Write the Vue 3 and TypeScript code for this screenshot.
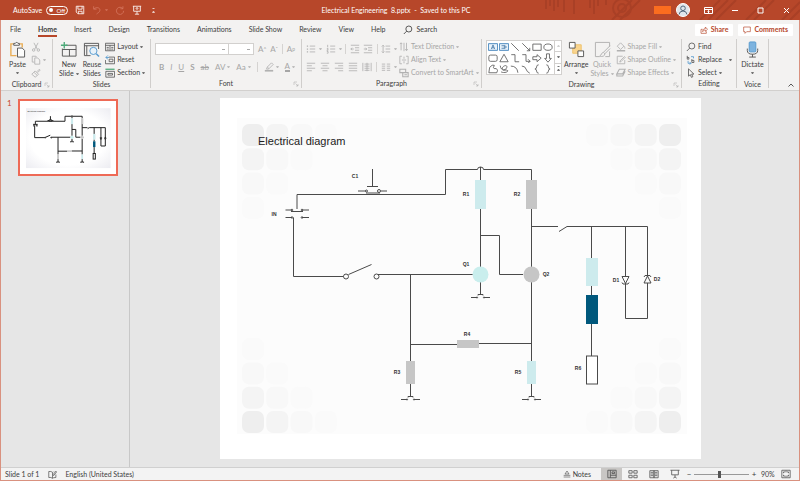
<script setup lang="ts">
import { ref } from 'vue'

const tabs = ['File', 'Home', 'Insert', 'Design', 'Transitions', 'Animations', 'Slide Show', 'Review', 'View', 'Help']
const activeTab = ref('Home')
const zoom = ref(90)

const shapes = ['textbox', 'textbox2', 'line', 'arrow', 'rect', 'oval', 'round', 'tri', 'elbow', 'elbow2', 'rarrow', 'darrow', 'free', 'scrib', 'arc', 'curve', 'lbrace', 'rbrace']

interface Tile { x: number; y: number; tone: string }
const tones = ['#eeeeee', '#f4f4f4', '#f8f8f8', '#fafafa']
const tiles: Tile[] = []
for (let row = 0; row < 4; row++) {
  for (let col = 0; col < 4 - row; col++) {
    const tone = tones[row + col]
    const left = 22 + col * 24.3
    const right = 439 - col * 24.3
    const top = 26 + row * 24.3
    const bottom = 313 - row * 24.3
    tiles.push({ x: left, y: top, tone }, { x: right, y: top, tone }, { x: left, y: bottom, tone }, { x: right, y: bottom, tone })
  }
}

interface Label { text: string; x: number; y: number }
const labels: Label[] = [
  { text: 'C1', x: 135, y: 80 },
  { text: 'IN', x: 54, y: 118 },
  { text: 'R1', x: 246, y: 98 },
  { text: 'R2', x: 297, y: 98 },
  { text: 'Q1', x: 246, y: 168 },
  { text: 'Q2', x: 326, y: 178 },
  { text: 'D1', x: 396, y: 184 },
  { text: 'D2', x: 437, y: 183 },
  { text: 'R3', x: 177, y: 276 },
  { text: 'R4', x: 247, y: 238 },
  { text: 'R5', x: 298, y: 276 },
  { text: 'R6', x: 358, y: 272 },
]
</script>

<template>
  <div class="window">
    <svg class="defs" aria-hidden="true">
      <symbol id="save" viewBox="0 0 12 12"><path d="M1.500 1.500h9v9h-7l-2-2zM3.500 1.500v3.500h5v-3.500M4 10.500v-3h4.500v3" /></symbol>
      <symbol id="undo" viewBox="0 0 12 12"><path d="M2 1.500v3.500h3.500M2.300 4.800C5 2 10 3 9.500 6.500C9.200 8.500 7 9.500 5.500 10.800" /></symbol>
      <symbol id="redo" viewBox="0 0 12 12"><path d="M9.500 1.500v3h-3M9.500 4.500A4.300 4.300 0 1 0 10.300 7" /></symbol>
      <symbol id="present" viewBox="0 0 12 12"><path d="M1 1.500h10M2 1.500v6h8v-6M6 7.500v3.500M3.500 11h5M6 3v3M4.500 4.500L6 3l1.500 1.500" /></symbol>
      <symbol id="search" viewBox="0 0 12 12"><circle cx="7" cy="4.800" r="3.600" /><path d="M4.400 7.400L1 10.800" /></symbol>
      <symbol id="share" viewBox="0 0 12 12"><path d="M4 5H1.500v6h8V8M4 8.500c0-3 1.500-4.500 4-4.500V1.500L11.300 5L8 8V6C6 6 5 7 4 8.500z" /></symbol>
      <symbol id="comment" viewBox="0 0 12 12"><path d="M1 1.500h10v7H5.500L3 11V8.500H1z" /></symbol>
      <symbol id="paste" viewBox="0 0 18 18"><path d="M8 15.500H2V3h3M11 3h3v4" stroke="#e8a33d" stroke-width="1.500" /><path d="M5 4.500v-2h1.700a1.500 1.500 0 0 1 2.800 0H11v2z" fill="#fff" /><path d="M9 7.500h5l2.500 2.500v7H9z" fill="#fff" /></symbol>
      <symbol id="cut" viewBox="0 0 12 12"><path d="M3.500 1l4 7.500M8.500 1l-4 7.500" /><circle cx="3.200" cy="9.600" r="1.500" /><circle cx="8.800" cy="9.600" r="1.500" /></symbol>
      <symbol id="copy" viewBox="0 0 12 12"><path d="M4 8.500H1.500v-7H6l1 1M4.500 3.500H8L10.500 6v5h-6z" /></symbol>
      <symbol id="brush" viewBox="0 0 12 12"><path d="M7 4.500l3-3l1 1l-3 3M5 3.500l4 4l-1.500 1.500l-4-4zM3.500 5L1 7.500L5 11l2.500-2" /></symbol>
      <symbol id="newslide" viewBox="0 0 18 18"><path d="M6 4.500h11v11.500H2.500V8M2.500 9H17M10 9v7" /><path d="M4.500 1v7M1 4.500h7" stroke="#2f9d63" stroke-width="1.400" /></symbol>
      <symbol id="reuse" viewBox="0 0 18 18"><path d="M8 15.500H1.500V2.500h15v6M1.500 5h15M4 5v10" /><circle cx="11" cy="10.500" r="3.800" fill="#e8f3fb" stroke="#3b8bc9" /><path d="M14 13.500l3 3" stroke="#3b8bc9" stroke-width="1.500" /></symbol>
      <symbol id="layout" viewBox="0 0 12 12"><path d="M.500 1.500h11v9H.500zM.500 4h11M6 4v6M2 6.500h2.500M7.500 6.500h2.500M2 8.500h2.500M7.500 8.500h2.500" /></symbol>
      <symbol id="reset" viewBox="0 0 12 12"><path d="M4.500 2.500h7v8H.500V6M5 5h4.500v3H5z" /><path d="M3.500 .500L1 3l2.500 2M1 3h4" stroke="#3b8bc9" /></symbol>
      <symbol id="section" viewBox="0 0 12 12"><path d="M1 4h10.500v7H1zM3.500 6.500h5.500v2H3.500z" /><path d="M.500 1.500h11" stroke="#2f9d63" stroke-width="1.500" /></symbol>
      <symbol id="marker" viewBox="0 0 12 12"><path d="M4 6l5-5l2 2l-5 5zM4 6L3 8.500h2.500L6 8" /><path d="M1 10.500h10" stroke-width="2" /></symbol>
      <symbol id="bullets" viewBox="0 0 12 12"><path d="M4.500 2.500H11M4.500 6H11M4.500 9.500H11" /><path d="M1 2.500h1.500M1 6h1.500M1 9.500h1.500" stroke-width="1.500" /></symbol>
      <symbol id="numbers" viewBox="0 0 12 12"><path d="M5 2.500h6M5 6h6M5 9.500h6M2 1v3M1 5.500h1.500v1.200L1 7.500h1.700M1 9h1.500v2H1" /></symbol>
      <symbol id="outdent" viewBox="0 0 12 12"><path d="M1 1.500h10M6 4.500h5M6 7.500h5M1 10.500h10M4.500 6H1M2.500 4.500L1 6l1.500 1.500" /></symbol>
      <symbol id="indent" viewBox="0 0 12 12"><path d="M1 1.500h10M6 4.500h5M6 7.500h5M1 10.500h10M1 6h3.500M3 4.500L4.500 6L3 7.500" /></symbol>
      <symbol id="spacing" viewBox="0 0 12 12"><path d="M5.500 2.500H11M5.500 6H11M5.500 9.500H11M2.500 1.500v9M1 3l1.500-1.500L4 3M1 9l1.500 1.500L4 9" /></symbol>
      <symbol id="left" viewBox="0 0 12 12"><path d="M1 1.500h10M1 4.500h6M1 7.500h10M1 10.500h6" /></symbol>
      <symbol id="center" viewBox="0 0 12 12"><path d="M1 1.500h10M3 4.500h6M1 7.500h10M3 10.500h6" /></symbol>
      <symbol id="right" viewBox="0 0 12 12"><path d="M1 1.500h10M5 4.500h6M1 7.500h10M5 10.500h6" /></symbol>
      <symbol id="justify" viewBox="0 0 12 12"><path d="M1 1.500h10M1 4.500h10M1 7.500h10M1 10.500h10" /></symbol>
      <symbol id="distribute" viewBox="0 0 12 12"><path d="M1 1v10M11 1v10M3 2.500h6M3 5h6M3 7.500h6M3 10h6M6 1v10" /></symbol>
      <symbol id="columns" viewBox="0 0 12 12"><path d="M1 2.500h4M1 5h4M1 7.500h4M1 10h4M7 2.500h4M7 5h4M7 7.500h4M7 10h4" /></symbol>
      <symbol id="direction" viewBox="0 0 12 12"><path d="M2.500 1v9M1 2.500L2.500 1L4 2.500M6 1v10M9 1v9M7.500 8.500L9 10.500l1.500-2" /></symbol>
      <symbol id="align" viewBox="0 0 12 12"><path d="M3.500 1.500H1v9h2.500M8.500 1.500H11v9H8.500M3.500 6h5M6 2v2.500M6 7.500V10" /></symbol>
      <symbol id="smart" viewBox="0 0 12 12"><path d="M1 1.500h7v4H1zM4.500 5.500h6.500v5H4.500zM6.500 8h3" stroke-width="1.300" /></symbol>
      <symbol id="arrange" viewBox="0 0 18 18"><path d="M5 4h9v9H5z" fill="#fbd07e" stroke="#eebb55" /><path d="M1.500 1.500h6v6h-6zM10.500 10.500h6v6h-6z" fill="#fff" /></symbol>
      <symbol id="styles" viewBox="0 0 18 18"><path d="M16.500 6V1.500h-15v15H6" /><path d="M17 5l-7 7l1.500 1.500L17 8M10 12c-2 0-2 3-4 4c3 1 5.500 0 5.500-2.500" /><path d="M12 16.500h4.500V11" /></symbol>
      <symbol id="fill" viewBox="0 0 12 12"><path d="M5.500 1l4 4l-4 4l-4-4zM9.500 5c1 1.500 1.500 2 1 3" /><path d="M1 10.500h10" stroke-width="1.800" /></symbol>
      <symbol id="outline" viewBox="0 0 12 12"><path d="M8 1.500H1.500v9h9V6M10.500 1.500L5 7l-.500 1.500L6 8l5.500-5.500" /></symbol>
      <symbol id="effects" viewBox="0 0 12 12"><path d="M4 1.500h7L8 7H1zM1 7v2.500h7L11 4" stroke-width="1.300" /></symbol>
      <symbol id="replace" viewBox="0 0 12 12"><path d="M1.500 1v4h2V3h-2M7 5v4h2.500V6.500H7" /><path d="M2.500 7v3H6M4.500 8.500L6 10l-1.500 1.500M6 2h3v2" stroke="#3b8bc9" /></symbol>
      <symbol id="cursor" viewBox="0 0 12 12"><path d="M3 1l6.500 6.300H6.800L8.200 10.500L6.500 11.200L5.200 8L3 9.800z" /></symbol>
      <symbol id="mic" viewBox="0 0 18 18"><rect x="5.500" y="1" width="7" height="10.500" rx="1" fill="#69a9dc" stroke="#3b8bc9" /><path d="M3.500 8v2q0 4 5.500 4t5.500-4V8M9 14v3M5.500 17h7" /></symbol>
      <symbol id="textbox" viewBox="0 0 12 12"><path d="M.500 2h11v8H.500z" fill="#e4f0fa" stroke="#3279b7" stroke-width="1.200" /><path d="M4 8.500L6 3.500l2 5M4.800 7h2.400" stroke="#235f96" /></symbol>
      <symbol id="textbox2" viewBox="0 0 12 12"><path d="M.500 2h11v8H.500z" fill="#e4f0fa" stroke="#3279b7" stroke-width="1.200" /><path d="M3 4.500H6M3 7.500H6M6.500 4L9 6L6.500 8z" stroke="#235f96" /></symbol>
      <symbol id="line" viewBox="0 0 12 12"><path d="M1.500 1.500l9 9" /></symbol>
      <symbol id="arrow" viewBox="0 0 12 12"><path d="M1.500 1.500l9 9M10.500 7v3.500H7" /></symbol>
      <symbol id="rect" viewBox="0 0 12 12"><path d="M1 2.500h10v7.500H1z" /></symbol>
      <symbol id="oval" viewBox="0 0 12 12"><ellipse cx="6" cy="6.200" rx="5" ry="3.800" /></symbol>
      <symbol id="round" viewBox="0 0 12 12"><rect x="1" y="2.500" width="10" height="7.500" rx="2" /></symbol>
      <symbol id="tri" viewBox="0 0 12 12"><path d="M6 1.500l5 9H1z" /></symbol>
      <symbol id="elbow" viewBox="0 0 12 12"><path d="M1.500 2H6v8.500h5" /></symbol>
      <symbol id="elbow2" viewBox="0 0 12 12"><path d="M1.500 2H6v8h5M8.500 7.500L11 10l-2.500 2" /></symbol>
      <symbol id="rarrow" viewBox="0 0 12 12"><path d="M1 4.500h5V2l5 4.200l-5 4.200V8H1z" /></symbol>
      <symbol id="darrow" viewBox="0 0 12 12"><path d="M4.200 1h3.600v5.500H10L6 11L2 6.500h2.200z" /></symbol>
      <symbol id="free" viewBox="0 0 12 12"><path d="M1 10.500L2 4l3-2.500h2.500L6.500 4.500q0 1.500 3.500 1l1.500 2l-1 3z" /></symbol>
      <symbol id="scrib" viewBox="0 0 12 12"><path d="M1.500 2c1 8 8 5 8 1.500S3 3 4 6s6 0 6.500 2s-5 3-8 1.500" /></symbol>
      <symbol id="arc" viewBox="0 0 12 12"><path d="M1 2.500q7.500 0 8.500 8" /></symbol>
      <symbol id="curve" viewBox="0 0 12 12"><path d="M1 2.500q4 0 5 3.500t4.500 5" /></symbol>
      <symbol id="lbrace" viewBox="0 0 12 12"><path d="M8 1Q5.500 1 5.500 3.500Q5.500 6 3.500 6Q5.500 6 5.500 8.500Q5.500 11 8 11" /></symbol>
      <symbol id="rbrace" viewBox="0 0 12 12"><path d="M4 1Q6.500 1 6.500 3.500Q6.500 6 8.500 6Q6.500 6 6.500 8.500Q6.500 11 4 11" /></symbol>
      <symbol id="book" viewBox="0 0 12 12"><path d="M6 3v8M6 3Q4 1.500 1 2v8q3-.500 5 1q1-1 4.500-1V6M7 3l1-1M6.500 6.500l4-5l1 1l-4 5z" /></symbol>
      <symbol id="notes" viewBox="0 0 12 12"><path d="M3 6l3-4.500L9 6zM1 8h10M1 10.500h10" /></symbol>
      <symbol id="normal" viewBox="0 0 12 12"><path d="M1 1.500h10v9H1zM4 1.500v9M4 7.500h7M6 3.500h3v2H6z" /></symbol>
      <symbol id="sorter" viewBox="0 0 12 12"><path d="M1 2h4v3H1zM7 2h4v3H7zM1 7.500h4v3H1zM7 7.500h4v3H7z" /></symbol>
      <symbol id="reading" viewBox="0 0 12 12"><path d="M1 2h5v8.500H1zM6 2h5v8.500H6zM2 4h3M2 6h3M2 8h3M7 4h3M7 6h3M7 8h3" /></symbol>
      <symbol id="show" viewBox="0 0 12 12"><path d="M.500 1.500h11M2 1.500v5.500h8V1.500M6 7v3M4 11l2-1.500L8 11" /></symbol>
      <symbol id="fit" viewBox="0 0 12 12"><path d="M1 1.500h10v9H1zM3 5V3.500h2M7 3.500h2V5M9 7v1.500H7M5 8.500H3V7M6 2v2M6 8v2" /></symbol>
      <symbol id="launcher" viewBox="0 0 12 12"><path d="M2 8V2h6M5 5l5 5M10 6v4H6" /></symbol>

      <g id="ground">
        <path d="M0 3.500H6M13 3.500H19M7 1.500V.500H12V1.500" />
        <circle cx="6" cy="3.500" r=".6" /><circle cx="13" cy="3.500" r=".6" />
      </g>
      <g id="circuit">
        <path d="M77 111V96.500H225.500V71.500H257.500A3 2.500 0 0 1 263.500 71.500H311.500V82M260.500 69V82M260.500 110V169M311.500 110V169" />
        <path d="M73.500 119.500V178.500H123.500M158 176.500H253M190.500 176.500V263M190.500 246.500H237M259 245.500H311.500M190.500 286V298M311.500 184V263M311.500 286V298M260.500 184V196" />
        <path d="M260.500 137.500H279.500V176.500H303M311.500 128.500H338M339 133.500L347 128.500H427.500M371.500 128.500V160M371.500 188V198M371.500 226V258M405.500 128.500V178M405.500 185V220.500H427.500V185M427.500 178V128.500" />
        <path d="M152.500 71V88.500M147 88.500H158M138 93H146M161 93H167M146 95H160M128.500 176.500L151.500 166.500" />
        <path d="M65.500 112H72M82 112H89M71 113.500H83M65.500 119.500H72M82 119.500H89" />
        <path d="M402 178.500H409L405.500 185.500zM402 184.500l1 1.500h5l1-1.500M424 185H431L427.500 178zM424 179l1-1.500h5l1 1.500" />
        <circle cx="126" cy="178.500" r="2.500" /><circle cx="156.500" cy="178.500" r="2.500" />
        <circle cx="159" cy="93" r="1.500" /><circle cx="146.500" cy="93" r="1" />
        <circle cx="72" cy="112" r=".8" /><circle cx="82" cy="112" r=".8" /><circle cx="72" cy="119.500" r=".8" /><circle cx="82" cy="119.500" r=".8" />
        <use href="#ground" x="251" y="196" /><use href="#ground" x="181" y="298" /><use href="#ground" x="302" y="298" />
        <g stroke="none">
          <rect x="255" y="82" width="11" height="29" fill="#cdebed" /><rect x="306" y="82" width="11" height="29" fill="#c6c6c6" />
          <rect x="366" y="160" width="12" height="28" fill="#cdebed" /><rect x="366" y="197" width="12" height="29" fill="#00587c" />
          <rect x="186" y="263" width="9" height="23" fill="#c6c6c6" /><rect x="307" y="263" width="9" height="23" fill="#cdebed" />
          <rect x="237" y="242" width="22" height="8" fill="#c6c6c6" />
          <circle cx="260.500" cy="176.500" r="8" fill="#c9eeed" /><circle cx="311.500" cy="176.500" r="8" fill="#c6c6c6" />
        </g>
        <rect x="366.500" y="258" width="11" height="28" fill="#fff" />
      </g>
    </svg>

    <header class="titlebar">
      <svg class="pattern" viewBox="0 0 260 20" aria-hidden="true">
        <path d="M6 0v9M10 0v6M14 0v11M18 0v7M24 0v12M34 0v14M50 0v8M54 0v14M58 0v6M66 0v5M72 20L92 0M80 20L100 0M160 20L180 0M168 20L188 0M176 20L196 0M206 20L226 0M214 20L234 0M242 20L260 2M250 20L260 10" />
        <circle cx="82" cy="8" r="9" /><circle cx="82" cy="8" r="4" />
      </svg>
      <div class="quick">
        <span>AutoSave</span>
        <button class="toggle" type="button" aria-label="AutoSave off"><i></i>Off</button>
        <button type="button" aria-label="Save"><svg class="ic"><use href="#save" /></svg></button>
        <button class="faint" type="button" aria-label="Undo"><svg class="ic"><use href="#undo" /></svg><b class="caret"></b></button>
        <button class="faint" type="button" aria-label="Redo"><svg class="ic"><use href="#redo" /></svg></button>
        <button type="button" aria-label="Start from beginning"><svg class="ic"><use href="#present" /></svg></button>
        <button type="button" aria-label="Customize toolbar"><b class="caret more"></b></button>
      </div>
      <h1>Electrical Engineering&nbsp; 8.pptx&nbsp; -&nbsp; Saved to this PC</h1>
      <div class="syscontrols">
        <span class="badge"></span>
        <svg class="avatar" viewBox="0 0 14 14"><circle cx="7" cy="7" r="6.500" fill="#dfe5ea" stroke="#fff" /><circle cx="7" cy="5.300" r="2.300" fill="none" stroke="#53687a" /><path d="M3 11.500Q3.500 8 7 8t4 3.500" fill="none" stroke="#53687a" /></svg>
        <button type="button" aria-label="Ribbon display options"><svg viewBox="0 0 9 9"><path d="M.500 1.500h8v6h-8zM.500 3.500h8M4.500 7V4.500M3.500 5.500l1-1l1 1" /></svg></button>
        <button type="button" aria-label="Minimize"><svg viewBox="0 0 9 9"><path d="M2 4.500h6" /></svg></button>
        <button type="button" aria-label="Maximize"><svg viewBox="0 0 9 9"><path d="M2 2h5v5H2z" /></svg></button>
        <button type="button" aria-label="Close"><svg viewBox="0 0 9 9"><path d="M2 2l5 5M7 2L2 7" /></svg></button>
      </div>
    </header>

    <nav class="tabs">
      <button v-for="t in tabs" :key="t" type="button" :class="{ active: t === activeTab }" @click="activeTab = t">{{ t }}</button>
      <button class="search" type="button"><svg class="ic"><use href="#search" /></svg>Search</button>
      <span class="grow"></span>
      <button class="action" type="button"><svg class="ic sm"><use href="#share" /></svg>Share</button>
      <button class="action" type="button"><svg class="ic sm"><use href="#comment" /></svg>Comments</button>
    </nav>

    <section class="ribbon" aria-label="Home commands">
      <div class="group clipboard">
        <div class="body">
          <button class="big" type="button"><svg><use href="#paste" /></svg><span>Paste</span><b class="caret"></b></button>
          <div class="stack dim">
            <button type="button" aria-label="Cut"><svg class="ic"><use href="#cut" /></svg></button>
            <button type="button" aria-label="Copy"><svg class="ic"><use href="#copy" /></svg><b class="caret"></b></button>
            <button type="button" aria-label="Format painter"><svg class="ic"><use href="#brush" /></svg></button>
          </div>
        </div>
        <footer>Clipboard<svg class="launch"><use href="#launcher" /></svg></footer>
      </div>

      <div class="group slides">
        <div class="body">
          <button class="big" type="button"><svg><use href="#newslide" /></svg><span>New</span><span>Slide<b class="caret"></b></span></button>
          <button class="big" type="button"><svg><use href="#reuse" /></svg><span>Reuse</span><span>Slides</span></button>
          <div class="stack">
            <button type="button"><svg class="ic"><use href="#layout" /></svg>Layout<b class="caret"></b></button>
            <button type="button"><svg class="ic"><use href="#reset" /></svg>Reset</button>
            <button type="button"><svg class="ic"><use href="#section" /></svg>Section<b class="caret"></b></button>
          </div>
        </div>
        <footer>Slides</footer>
      </div>

      <div class="group font">
        <div class="body dim">
          <div class="row">
            <select class="family" aria-label="Font"><option></option></select>
            <select class="size" aria-label="Font size"><option></option></select>
            <button type="button">A<sup>^</sup></button>
            <button type="button">A<sup>ˇ</sup></button>
            <i class="bar"></i>
            <button type="button">A<sub>p</sub></button>
          </div>
          <div class="row tools">
            <button type="button"><strong>B</strong></button>
            <button type="button"><em>I</em></button>
            <button type="button"><u>U</u></button>
            <button type="button"><strong>S</strong></button>
            <button type="button"><s>ab</s></button>
            <button type="button">AV<b class="caret"></b></button>
            <button type="button">Aa<b class="caret"></b></button>
            <i class="bar"></i>
            <button type="button" aria-label="Highlight"><svg class="ic"><use href="#marker" /></svg><b class="caret"></b></button>
            <button type="button"><span class="inked">A</span><b class="caret"></b></button>
          </div>
        </div>
        <footer>Font<svg class="launch"><use href="#launcher" /></svg></footer>
      </div>

      <div class="group para">
        <div class="body dim">
          <div class="rows">
            <div class="row">
              <button type="button" aria-label="Bullets"><svg class="ic"><use href="#bullets" /></svg><b class="caret"></b></button>
              <button type="button" aria-label="Numbering"><svg class="ic"><use href="#numbers" /></svg><b class="caret"></b></button>
              <i class="bar"></i>
              <button type="button" aria-label="Decrease indent"><svg class="ic"><use href="#outdent" /></svg></button>
              <button type="button" aria-label="Increase indent"><svg class="ic"><use href="#indent" /></svg></button>
              <i class="bar"></i>
              <button type="button" aria-label="Line spacing"><svg class="ic"><use href="#spacing" /></svg><b class="caret"></b></button>
            </div>
            <div class="row">
              <button type="button" aria-label="Align left"><svg class="ic"><use href="#left" /></svg></button>
              <button type="button" aria-label="Center"><svg class="ic"><use href="#center" /></svg></button>
              <button type="button" aria-label="Align right"><svg class="ic"><use href="#right" /></svg></button>
              <button type="button" aria-label="Justify"><svg class="ic"><use href="#justify" /></svg></button>
              <button type="button" aria-label="Distribute"><svg class="ic"><use href="#distribute" /></svg></button>
              <i class="bar"></i>
              <button type="button" aria-label="Columns"><svg class="ic"><use href="#columns" /></svg><b class="caret"></b></button>
            </div>
          </div>
          <div class="stack">
            <button type="button"><svg class="ic"><use href="#direction" /></svg>Text Direction<b class="caret"></b></button>
            <button type="button"><svg class="ic"><use href="#align" /></svg>Align Text<b class="caret"></b></button>
            <button type="button"><svg class="ic"><use href="#smart" /></svg>Convert to SmartArt<b class="caret"></b></button>
          </div>
        </div>
        <footer>Paragraph<svg class="launch"><use href="#launcher" /></svg></footer>
      </div>

      <div class="group drawing">
        <div class="body">
          <div class="gallery">
            <div class="shapes">
              <button v-for="s in shapes" :key="s" type="button" :aria-label="s"><svg class="ic"><use :href="'#' + s" /></svg></button>
            </div>
            <div class="scroller"><button type="button" aria-label="Up" disabled><b class="caret up"></b></button><button type="button" aria-label="Down"><b class="caret"></b></button><button type="button" aria-label="More"><b class="caret more"></b></button></div>
          </div>
          <button class="big" type="button"><svg><use href="#arrange" /></svg><span>Arrange</span><b class="caret"></b></button>
          <button class="big dim" type="button"><svg><use href="#styles" /></svg><span>Quick</span><span>Styles<b class="caret"></b></span></button>
          <div class="stack dim">
            <button type="button"><svg class="ic"><use href="#fill" /></svg>Shape Fill<b class="caret"></b></button>
            <button type="button"><svg class="ic"><use href="#outline" /></svg>Shape Outline<b class="caret"></b></button>
            <button type="button"><svg class="ic"><use href="#effects" /></svg>Shape Effects<b class="caret"></b></button>
          </div>
        </div>
        <footer>Drawing<svg class="launch"><use href="#launcher" /></svg></footer>
      </div>

      <div class="group editing">
        <div class="body">
          <div class="stack">
            <button type="button"><svg class="ic"><use href="#search" /></svg>Find</button>
            <button type="button"><svg class="ic"><use href="#replace" /></svg>Replace<b class="caret far"></b></button>
            <button type="button"><svg class="ic"><use href="#cursor" /></svg>Select<b class="caret"></b></button>
          </div>
        </div>
        <footer>Editing</footer>
      </div>

      <div class="group voice">
        <div class="body">
          <button class="big" type="button"><svg><use href="#mic" /></svg><span>Dictate</span><b class="caret"></b></button>
        </div>
        <footer>Voice</footer>
      </div>
      <button class="collapse" type="button" aria-label="Collapse ribbon"><svg viewBox="0 0 8 8"><path d="M1.500 5.500L4 3l2.500 2.500" /></svg></button>
    </section>

    <main class="workspace">
      <aside class="thumbs">
        <span class="number">1</span>
        <button class="thumb" type="button" aria-label="Slide 1">
          <svg viewBox="0 0 481 361">
            <defs>
              <radialGradient id="paper" r=".75"><stop offset=".6" stop-color="#fff" /><stop offset="1" stop-color="#e9e9ef" /></radialGradient>
            </defs>
            <rect x="30" y="36" width="424" height="300" fill="url(#paper)" stroke="none" />
            <text x="38" y="54" class="heading">Electrical diagram</text>
            <use href="#circuit" class="heavy" y="5" />
          </svg>
        </button>
      </aside>
      <section class="canvas">
        <svg class="slide" viewBox="0 0 481 361" role="img" aria-label="Electrical diagram">
          <g stroke="none">
            <rect x="17" y="20" width="450" height="316" fill="#fcfcfc" />
            <rect v-for="(t, i) in tiles" :key="i" :x="t.x" :y="t.y" width="22" height="22" rx="7" :fill="t.tone" />
          </g>
          <text x="38" y="47" class="heading">Electrical diagram</text>
          <use href="#circuit" class="fine" />
          <text v-for="l in labels" :key="l.text" :x="l.x" :y="l.y" text-anchor="middle" class="label">{{ l.text }}</text>
        </svg>
      </section>
    </main>

    <footer class="status">
      <span>Slide 1 of 1</span>
      <svg class="ic"><use href="#book" /></svg>
      <span>English (United States)</span>
      <span class="grow"></span>
      <button class="notes" type="button"><svg class="ic sm"><use href="#notes" /></svg>Notes</button>
      <button class="view on" type="button" aria-label="Normal"><svg class="ic"><use href="#normal" /></svg></button>
      <button class="view" type="button" aria-label="Slide sorter"><svg class="ic"><use href="#sorter" /></svg></button>
      <button class="view" type="button" aria-label="Reading view"><svg class="ic"><use href="#reading" /></svg></button>
      <button class="view" type="button" aria-label="Slide show"><svg class="ic"><use href="#show" /></svg></button>
      <button class="step" type="button" aria-label="Zoom out" @click="zoom -= 10">−</button>
      <input v-model.number="zoom" type="range" min="10" max="186" aria-label="Zoom">
      <button class="step" type="button" aria-label="Zoom in" @click="zoom += 10">+</button>
      <span class="percent">{{ zoom }}%</span>
      <button class="fit" type="button" aria-label="Fit slide"><svg class="ic"><use href="#fit" /></svg></button>
    </footer>
  </div>
</template>

<style>
body { margin: 0; }
</style>

<style scoped>
* { box-sizing: border-box; }
.window {
  min-height: 100vh;
  display: flex;
  flex-direction: column;
  background: #e6e6e6;
  color: #3d3d3d;
  font: 7px/9px Lato, "Open Sans", sans-serif;
  border: 1px solid #d9917f;
  border-top: 0;
  white-space: nowrap;
}
.defs { position: absolute; width: 0; height: 0; }
svg { fill: none; stroke: currentColor; stroke-width: 1; flex: none; }
button { font: inherit; color: inherit; background: none; border: 0; padding: 0; display: flex; align-items: center; }
.ic { width: 10px; height: 10px; }
.ic.sm { width: 8px; height: 8px; }
.ribbon svg { opacity: .85; }
.grow { flex: 1; }
.caret { display: inline-block; flex: none; margin-left: 3px; border: 1px solid transparent; border-top: 2px solid currentColor; border-bottom: 0; width: 3px; vertical-align: middle; opacity: .7; }
.caret.up { border-top: 0; border-bottom: 2px solid #bbb; }
.caret.more { height: 5px; border-top: 1px solid currentColor; border-bottom: 2px solid currentColor; }
.dim { color: #a6a6a6; }

.titlebar { position: relative; display: grid; grid-template-columns: 1fr auto 1fr; align-items: center; height: 20px; margin: 0 -1px; padding: 0 9px 0 13px; background: #b7472a; color: #fff; }
.titlebar > div, .titlebar h1 { position: relative; }
.pattern { position: absolute; right: 0; top: 0; width: 260px; height: 20px; stroke: #a94026; stroke-width: 2; }
h1 { margin: 0; font-size: 7px; font-weight: 400; padding-right: 12px; }
.quick, .syscontrols { display: flex; align-items: center; }
.quick { gap: 7px; }
.toggle { width: 22px; height: 9px; margin-left: -3px; padding: 0 2px; border: 1px solid #fff; border-radius: 5px; font-size: 6px; line-height: 7px; justify-content: space-between; }
.toggle i { width: 4px; height: 4px; border-radius: 2px; background: #fff; }
.faint { color: #d5765f; }
.syscontrols { justify-content: flex-end; }
.badge { width: 17px; height: 8px; background: #fb6d1f; margin-right: 5px; }
.avatar { width: 14px; height: 14px; margin-right: 14px; }
.syscontrols button { width: 9px; margin-left: 17px; }
.syscontrols .avatar + button { margin-left: 0; }
.syscontrols button svg { width: 9px; height: 9px; }

.tabs { display: flex; align-items: center; gap: 17px; height: 18px; padding: 0 6px 0 9px; background: #f3f2f1; }
.tabs button { height: 14px; margin-top: 1px; border-bottom: 2px solid transparent; border-top: 2px solid transparent; }
.tabs .active { border-bottom-color: #b7472a; font-weight: 700; }
.tabs .search { gap: 4px; }
.tabs .action { height: 12px; padding: 0 5px; gap: 3px; border: 0; background: #fff; color: #b7472a; border-radius: 1px; font-weight: 700; }
.tabs .action + .action { margin-left: -12px; }

.ribbon { display: flex; height: 53px; padding: 1px 0 2px; background: #f3f2f1; border-bottom: 1px solid #d2d0ce; position: relative; }
.group { display: flex; flex-direction: column; border-right: 1px solid #d0cecc; flex: none; }
.body { display: flex; flex: 1; padding-top: 1px; }
.group footer { position: relative; text-align: center; height: 9px; }
.launch { position: absolute; right: 2px; top: 2px; width: 6px; height: 6px; color: #999; }
.big { flex-direction: column; height: 40px; }
.big > svg { width: 17px; height: 17px; margin: 1px 0 2px; }
.big > .caret { margin: 3px 0 0; }
.big span > .caret { margin-left: 2px; }
.stack { display: flex; flex-direction: column; }
.stack button { height: 13px; gap: 2px; }
.stack .caret { margin-left: 0; }
.stack .caret.far { margin-left: 5px; }
.row { display: flex; align-items: center; height: 18px; }
.bar { width: 1px; height: 10px; background: #d5d3d1; }
.clipboard { width: 52px; }
.clipboard .body { padding-left: 8px; gap: 5px; }
.slides { width: 98px; }
.slides .body { padding-left: 6px; gap: 4px; }
.font { width: 151px; }
.font .body, .rows { display: flex; flex-direction: column; }
.font .body { padding-left: 4px; padding-right: 6px; }
.font .row { justify-content: space-between; font-size: 8px; }
.font .caret { margin-left: 2px; }
.font .tools { padding-left: 4px; }
.font select { appearance: none; height: 12px; border: 1px solid #d2d0ce; border-radius: 0; background: linear-gradient(#aaa, #aaa) no-repeat right 3px center / 3px 1px #fff; padding: 0; }
.family { width: 74px; }
.size { width: 26px; margin-left: -5px; }
sup, sub { font-size: 5px; line-height: 0; }
.inked { border-bottom: 2px solid currentColor; line-height: 8px; }
.para { width: 180px; }
.para .body { padding-left: 4px; gap: 2px; }
.para .rows { width: 91px; }
.para .row { justify-content: space-between; }
.drawing { width: 200px; }
.drawing .body { padding-left: 4px; gap: 2px; }
.gallery { display: flex; height: 35px; background: #fff; border: 1px solid #d2d0ce; }
.shapes { display: grid; grid-template-columns: repeat(6, 11px); align-content: space-around; padding-left: 1px; }
.scroller { width: 7px; display: flex; flex-direction: column; border-left: 1px solid #d2d0ce; }
.scroller button { flex: 1; justify-content: center; }
.scroller button + button { border-top: 1px solid #d2d0ce; }
.scroller .caret { margin: 0; }
.editing { width: 55px; }
.editing .body { padding-left: 4px; }
.voice { width: 32px; }
.voice .body { justify-content: center; }
.collapse { position: absolute; right: 4px; bottom: 1px; }
.collapse svg { width: 8px; height: 8px; }

.workspace { flex: 1; display: flex; }
.thumbs { width: 129px; flex: none; display: flex; align-items: flex-start; padding: 8px 0 0 6px; gap: 7px; border-right: 1px solid #c8c8c8; }
.number { color: #c8472b; font-size: 8px; width: 4px; }
.thumb { width: 100px; height: 77px; border: 2px solid #ee6a56; background: #fff; }
.thumb svg { width: 100%; }
.heavy { stroke: #222; stroke-width: 5; }
.fine { stroke: #4a4a4a; stroke-width: 1; }
.canvas { flex: 1; padding: 7px 98px 8px 90px; }
.slide { display: block; width: 100%; height: auto; background: #fff; }
.heading { font: 11px "Liberation Sans", sans-serif; fill: #222; stroke: none; }
.label { font: bold 5px "Liberation Sans", sans-serif; fill: #333; stroke: none; }

.status { display: flex; align-items: center; height: 13px; padding: 0 8px 0 4px; background: #f3f3f3; border-top: 1px solid #d0d0d0; }
.status svg { opacity: .85; }
.status > .ic { margin: 0 8px 0 9px; width: 9px; height: 9px; }
.notes { gap: 2px; margin-right: 10px; }
.view { width: 21px; height: 12px; justify-content: center; }
.view.on { background: #c8c6c4; }
.step { width: 8px; justify-content: center; font-size: 8px; }
input[type="range"] { appearance: none; width: 55px; height: 8px; margin: 0 1px; background: linear-gradient(#999, #999) no-repeat center / 100% 1px; }
input[type="range"]::-webkit-slider-thumb { appearance: none; width: 3px; height: 7px; background: #555; }
.percent { width: 15px; margin: 0 5px 0 3px; }
</style>
